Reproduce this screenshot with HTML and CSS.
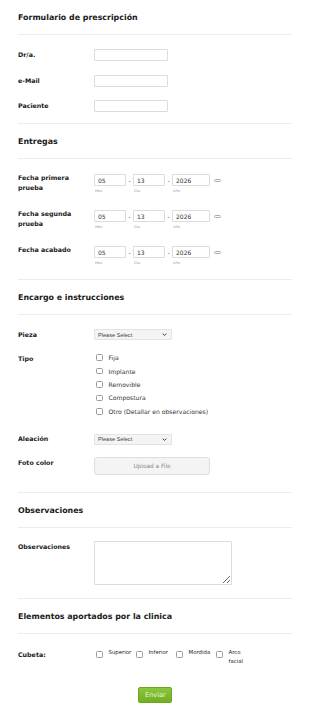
FILE: index.html
```html
<!DOCTYPE html>
<html lang="es">
<head>
    <meta charset="UTF-8">
    <meta name="viewport" content="width=device-width, initial-scale=1.0">
    <title>Formulario de prescripción</title>
    <link rel="stylesheet" href="styles.css">
</head>
<body>
    <form class="form">
        <div class="section-title">Formulario de prescripción</div>
        <div class="fields fields-text">
            <div class="field field-center">
                <label class="field-label" for="doctor">Dr/a.</label>
                <input class="text-input" type="text" id="doctor">
            </div>
            <div class="field field-center">
                <label class="field-label" for="email">e-Mail</label>
                <input class="text-input" type="email" id="email">
            </div>
            <div class="field field-center">
                <label class="field-label" for="paciente">Paciente</label>
                <input class="text-input" type="text" id="paciente">
            </div>
        </div>

        <div class="section-title">Entregas</div>
        <div class="fields fields-dates">
            <div class="field">
                <label class="field-label label-date">Fecha primera prueba</label>
                <div class="date">
                    <div class="date-row">
                        <input class="date-box date-short" type="text" value="05">
                        <span class="date-sep">-</span>
                        <input class="date-box date-short" type="text" value="13">
                        <span class="date-sep">-</span>
                        <input class="date-box date-year" type="text" value="2026">
                        <span class="date-icon"></span>
                    </div>
                    <div class="date-row date-sub">
                        <span class="sub sub-short">Mes</span>
                        <span class="sub sub-short">Día</span>
                        <span class="sub">Año</span>
                    </div>
                </div>
            </div>
            <div class="field">
                <label class="field-label label-date">Fecha segunda prueba</label>
                <div class="date">
                    <div class="date-row">
                        <input class="date-box date-short" type="text" value="05">
                        <span class="date-sep">-</span>
                        <input class="date-box date-short" type="text" value="13">
                        <span class="date-sep">-</span>
                        <input class="date-box date-year" type="text" value="2026">
                        <span class="date-icon"></span>
                    </div>
                    <div class="date-row date-sub">
                        <span class="sub sub-short">Mes</span>
                        <span class="sub sub-short">Día</span>
                        <span class="sub">Año</span>
                    </div>
                </div>
            </div>
            <div class="field">
                <label class="field-label label-date">Fecha acabado</label>
                <div class="date">
                    <div class="date-row">
                        <input class="date-box date-short" type="text" value="05">
                        <span class="date-sep">-</span>
                        <input class="date-box date-short" type="text" value="13">
                        <span class="date-sep">-</span>
                        <input class="date-box date-year" type="text" value="2026">
                        <span class="date-icon"></span>
                    </div>
                    <div class="date-row date-sub">
                        <span class="sub sub-short">Mes</span>
                        <span class="sub sub-short">Día</span>
                        <span class="sub">Año</span>
                    </div>
                </div>
            </div>
        </div>

        <div class="section-title">Encargo e instrucciones</div>
        <div class="fields fields-order">
            <div class="field field-center">
                <label class="field-label" for="pieza">Pieza</label>
                <div class="select">
                    <select id="pieza"><option>Please Select</option></select>
                    <svg class="chevron" viewBox="0 0 8 5" width="5" height="3"><path d="M1 1l3 3 3-3" fill="none" stroke="#333" stroke-width="1.6"/></svg>
                </div>
            </div>
            <div class="field field-tipo">
                <label class="field-label label-tipo">Tipo</label>
                <div class="checks">
                    <label class="check"><input type="checkbox"><span>Fija</span></label>
                    <label class="check"><input type="checkbox"><span>Implante</span></label>
                    <label class="check"><input type="checkbox"><span>Removible</span></label>
                    <label class="check"><input type="checkbox"><span>Compostura</span></label>
                    <label class="check"><input type="checkbox"><span>Otro (Detallar en observaciones)</span></label>
                </div>
            </div>
            <div class="field field-center field-alloy">
                <label class="field-label" for="aleacion">Aleación</label>
                <div class="select">
                    <select id="aleacion"><option>Please Select</option></select>
                    <svg class="chevron" viewBox="0 0 8 5" width="5" height="3"><path d="M1 1l3 3 3-3" fill="none" stroke="#333" stroke-width="1.6"/></svg>
                </div>
            </div>
            <div class="field field-photo">
                <label class="field-label label-photo">Foto color</label>
                <button type="button" class="upload">Upload a File</button>
            </div>
        </div>

        <div class="section-title">Observaciones</div>
        <div class="fields fields-notes">
            <div class="field">
                <label class="field-label label-notes" for="obs">Observaciones</label>
                <textarea class="notes" id="obs"></textarea>
            </div>
        </div>

        <div class="section-title">Elementos aportados por la clinica</div>
        <div class="fields fields-last">
            <div class="field">
                <label class="field-label">Cubeta:</label>
                <div class="cubeta">
                    <label class="check check-col"><input type="checkbox"><span>Superior</span></label>
                    <label class="check check-col"><input type="checkbox"><span>Inferior</span></label>
                    <label class="check check-col"><input type="checkbox"><span>Mordida</span></label>
                    <label class="check check-col"><input type="checkbox"><span>Arco facial</span></label>
                </div>
            </div>
        </div>

        <div class="actions">
            <button type="submit" class="submit">Enviar</button>
        </div>
    </form>
</body>
</html>
```

FILE: styles.css
```css
body {
    margin: 0;
    background-color: #ffffff;
    color: #222222;
    font-family: "DejaVu Sans", Verdana, sans-serif;
}
.form {
    padding: 0 18px;
}
.section-title {
    padding: 13px 0 12px;
    font-size: 7.9px;
    line-height: 9px;
    font-weight: bold;
    color: #1a1a1a;
    border-bottom: 1px solid #ececec;
}
.fields {
    display: flex;
    flex-direction: column;
    border-bottom: 1px solid #ececec;
}
.fields-text {
    padding: 14px 0 11px;
    gap: 13.5px;
}
.fields-dates {
    padding: 15px 0 13px;
    gap: 16px;
}
.fields-order {
    padding: 14px 0 17px;
}
.fields-notes {
    padding: 13px 0 13px;
}
.fields-last {
    padding: 16px 0 0;
    border-bottom: none;
}
.field {
    display: flex;
    align-items: flex-start;
}
.field-center {
    align-items: center;
}
.field-label {
    flex: 0 0 62px;
    margin-right: 14px;
    font-size: 6.3px;
    line-height: 10px;
    font-weight: bold;
    color: #1a1a1a;
}
.label-date {
    margin-top: -1px;
}
.text-input {
    box-sizing: border-box;
    width: 74px;
    height: 12px;
    margin: 0;
    border: 1px solid #dcdcdc;
    border-radius: 1px;
}

/* fechas */
.date-row {
    display: flex;
    align-items: center;
}
.date-box {
    box-sizing: border-box;
    height: 12px;
    margin: 0;
    padding: 0 0 0 3px;
    border: 1px solid #dcdcdc;
    border-radius: 1px;
    font-family: inherit;
    font-size: 6px;
    color: #333333;
}
.date-short {
    width: 32px;
}
.date-year {
    width: 38px;
}
.date-sep {
    width: 7px;
    text-align: center;
    font-size: 6px;
    color: #444444;
}
.date-icon {
    box-sizing: border-box;
    width: 7px;
    height: 3px;
    margin-left: 4px;
    border: 1px solid #aaaaaa;
    border-radius: 2px;
}
.date-sub {
    margin-top: 2px;
    height: 6px;
}
.sub {
    padding-left: 1px;
    font-size: 3.6px;
    line-height: 6px;
    color: #a0a0a0;
}
.sub-short {
    width: 38px;
}

/* select */
.select {
    position: relative;
    width: 78px;
    height: 11px;
}
.select select {
    display: block;
    box-sizing: border-box;
    width: 100%;
    height: 11px;
    margin: 0;
    padding: 0 0 0 3px;
    border: 1px solid #e3e3e3;
    border-radius: 1px;
    background-color: #f4f4f4;
    font-family: "Liberation Sans", Arial, sans-serif;
    font-size: 5.6px;
    color: #444444;
    appearance: none;
}
.chevron {
    position: absolute;
    right: 5px;
    top: 4px;
}

/* casillas */
.field-tipo {
    margin-top: 11px;
}
.label-tipo {
    margin-top: 3px;
}
.checks {
    display: flex;
    flex-direction: column;
}
.check {
    display: flex;
    align-items: center;
    height: 13.4px;
    font-size: 6.1px;
    color: #333333;
}
.check input {
    box-sizing: border-box;
    width: 6.5px;
    height: 6.5px;
    margin: 0 6px 0 2px;
    border: 1px solid #9a9a9a;
    border-radius: 1.5px;
    background-color: #ffffff;
    appearance: none;
    flex: none;
}
.field-alloy {
    margin-top: 16px;
}
.field-photo {
    margin-top: 12px;
}
.label-photo {
    margin-top: 1px;
}
.upload {
    box-sizing: border-box;
    width: 116px;
    height: 18px;
    margin: 0;
    border: 1px solid #dedede;
    border-radius: 3px;
    background-color: #f4f4f4;
    font-family: inherit;
    font-size: 5.8px;
    color: #8a8a8a;
}

/* observaciones */
.label-notes {
    margin-top: 1px;
}
.notes {
    box-sizing: border-box;
    width: 138px;
    height: 44px;
    margin: 0;
    border: 1px solid #dcdcdc;
    border-radius: 1px;
}

/* cubeta */
.cubeta {
    display: grid;
    grid-template-columns: repeat(4, 40px);
    margin-top: -2px;
}
.check-col {
    align-items: flex-start;
    height: auto;
    line-height: 9px;
    font-size: 5.4px;
    color: #222222;
}
.check-col input {
    margin-top: 3.5px;
}

.actions {
    display: flex;
    justify-content: center;
    padding: 21px 0 10px;
}
.submit {
    width: 34px;
    height: 16px;
    border: 1px solid #6da51c;
    border-radius: 2px;
    background: linear-gradient(#8cc63f, #6fb022);
    font-family: inherit;
    font-size: 6.6px;
    color: #eef7de;
}
```
